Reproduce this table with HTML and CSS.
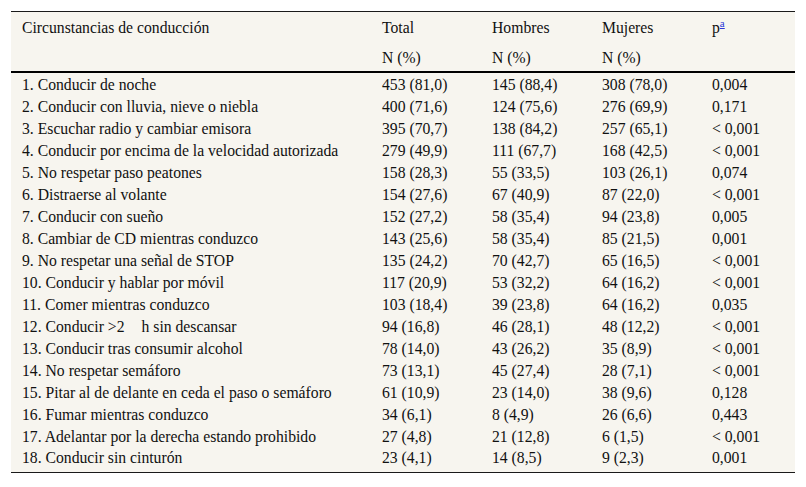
FILE: index.html
```html
<!DOCTYPE html>
<html lang="es">
<head>
<meta charset="utf-8">
<link rel="stylesheet" href="styles.css">
</head>
<body>
<table class="tbl">
  <colgroup>
    <col class="w1"><col class="wn"><col class="wn"><col class="wn"><col class="wp">
  </colgroup>
  <thead>
    <tr class="h1">
      <th>Circunstancias de conducción</th>
      <th>Total</th>
      <th>Hombres</th>
      <th>Mujeres</th>
      <th>p<sup><a class="fn" href="#">a</a></sup></th>
    </tr>
    <tr class="h2">
      <th></th>
      <th>N (%)</th>
      <th>N (%)</th>
      <th>N (%)</th>
      <th></th>
    </tr>
  </thead>
  <tbody>
    <tr><td>1. Conducir de noche</td><td>453 (81,0)</td><td>145 (88,4)</td><td>308 (78,0)</td><td>0,004</td></tr>
    <tr><td>2. Conducir con lluvia, nieve o niebla</td><td>400 (71,6)</td><td>124 (75,6)</td><td>276 (69,9)</td><td>0,171</td></tr>
    <tr><td>3. Escuchar radio y cambiar emisora</td><td>395 (70,7)</td><td>138 (84,2)</td><td>257 (65,1)</td><td>&lt; 0,001</td></tr>
    <tr><td>4. Conducir por encima de la velocidad autorizada</td><td>279 (49,9)</td><td>111 (67,7)</td><td>168 (42,5)</td><td>&lt; 0,001</td></tr>
    <tr><td>5. No respetar paso peatones</td><td>158 (28,3)</td><td>55 (33,5)</td><td>103 (26,1)</td><td>0,074</td></tr>
    <tr><td>6. Distraerse al volante</td><td>154 (27,6)</td><td>67 (40,9)</td><td>87 (22,0)</td><td>&lt; 0,001</td></tr>
    <tr><td>7. Conducir con sueño</td><td>152 (27,2)</td><td>58 (35,4)</td><td>94 (23,8)</td><td>0,005</td></tr>
    <tr><td>8. Cambiar de CD mientras conduzco</td><td>143 (25,6)</td><td>58 (35,4)</td><td>85 (21,5)</td><td>0,001</td></tr>
    <tr><td>9. No respetar una señal de STOP</td><td>135 (24,2)</td><td>70 (42,7)</td><td>65 (16,5)</td><td>&lt; 0,001</td></tr>
    <tr><td>10. Conducir y hablar por móvil</td><td>117 (20,9)</td><td>53 (32,2)</td><td>64 (16,2)</td><td>&lt; 0,001</td></tr>
    <tr><td>11. Comer mientras conduzco</td><td>103 (18,4)</td><td>39 (23,8)</td><td>64 (16,2)</td><td>0,035</td></tr>
    <tr><td>12. Conducir &gt;2<span class="gap"></span>h sin descansar</td><td>94 (16,8)</td><td>46 (28,1)</td><td>48 (12,2)</td><td>&lt; 0,001</td></tr>
    <tr><td>13. Conducir tras consumir alcohol</td><td>78 (14,0)</td><td>43 (26,2)</td><td>35 (8,9)</td><td>&lt; 0,001</td></tr>
    <tr><td>14. No respetar semáforo</td><td>73 (13,1)</td><td>45 (27,4)</td><td>28 (7,1)</td><td>&lt; 0,001</td></tr>
    <tr><td>15. Pitar al de delante en ceda el paso o semáforo</td><td>61 (10,9)</td><td>23 (14,0)</td><td>38 (9,6)</td><td>0,128</td></tr>
    <tr><td>16. Fumar mientras conduzco</td><td>34 (6,1)</td><td>8 (4,9)</td><td>26 (6,6)</td><td>0,443</td></tr>
    <tr><td>17. Adelantar por la derecha estando prohibido</td><td>27 (4,8)</td><td>21 (12,8)</td><td>6 (1,5)</td><td>&lt; 0,001</td></tr>
    <tr><td>18. Conducir sin cinturón</td><td>23 (4,1)</td><td>14 (8,5)</td><td>9 (2,3)</td><td>0,001</td></tr>
  </tbody>
</table>
</body>
</html>
```

FILE: styles.css
```css
html, body {
  margin: 0;
  padding: 0;
  background: #ffffff;
}
body {
  padding: 11px 11px 0 11px;
  font-family: "Liberation Serif", "Times New Roman", serif;
  font-size: 15.7px;
  color: #111111;
}
.tbl {
  width: 784px;
  border-collapse: collapse;
  table-layout: fixed;
  background: #f7f5ef;
  border-top: 1px solid #1a1a1a;
  border-bottom: 1px solid #1a1a1a;
}
.w1 { width: 360px; }
.wn { width: 110px; }
.wp { width: 94px; }
.tbl th, .tbl td {
  box-sizing: border-box;
  text-align: left;
  font-weight: normal;
  padding: 0 0 0 11px;
  white-space: nowrap;
  line-height: 17px;
  vertical-align: middle;
}
.tbl thead tr { height: 30px; }
.tbl thead th { padding-top: 2px; }
.tbl thead tr.h2 th { border-bottom: 2px solid #000; }
.tbl tbody tr { height: 22px; }
.tbl tbody td { padding-top: 3px; }
.tbl tbody tr:last-child { height: 27px; }
.tbl tbody tr:last-child td { padding-bottom: 5px; }
sup {
  font-size: 11px;
  line-height: 0;
  vertical-align: 6px;
}
.fn {
  color: #2b35d9;
  text-decoration: underline;
}
.gap {
  display: inline-block;
  width: 17px;
}
```
